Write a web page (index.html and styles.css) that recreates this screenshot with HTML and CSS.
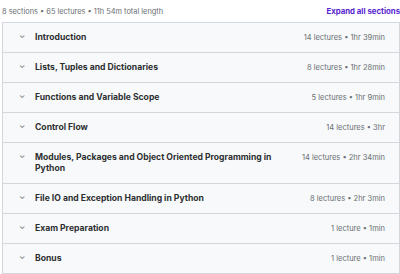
FILE: index.html
```html
<!DOCTYPE html>
<html lang="en">
<head>
    <meta charset="UTF-8">
    <title>Course content</title>
    <link rel="stylesheet" href="styles.css">
</head>
<body>
    <div class="content">
        <div class="head">
            <span class="summary">8 sections • 65 lectures • 11h 54m total length</span>
            <span class="expand">Expand all sections</span>
        </div>
        <ul class="sections">
            <li><span class="chev">&#8964;</span><span class="title">Introduction</span><span class="meta">14 lectures • 1hr 39min</span></li>
            <li><span class="chev">&#8964;</span><span class="title">Lists, Tuples and Dictionaries</span><span class="meta">8 lectures • 1hr 28min</span></li>
            <li><span class="chev">&#8964;</span><span class="title">Functions and Variable Scope</span><span class="meta">5 lectures • 1hr 9min</span></li>
            <li><span class="chev">&#8964;</span><span class="title">Control Flow</span><span class="meta">14 lectures • 3hr</span></li>
            <li><span class="chev">&#8964;</span><span class="title">Modules, Packages and Object Oriented Programming in Python</span><span class="meta">14 lectures • 2hr 34min</span></li>
            <li><span class="chev">&#8964;</span><span class="title">File IO and Exception Handling in Python</span><span class="meta">8 lectures • 2hr 3min</span></li>
            <li><span class="chev">&#8964;</span><span class="title">Exam Preparation</span><span class="meta">1 lecture • 1min</span></li>
            <li><span class="chev">&#8964;</span><span class="title">Bonus</span><span class="meta">1 lecture • 1min</span></li>
        </ul>
    </div>
</body>
</html>
```
FILE: styles.css
```css
*{
    margin: 0px;
    padding: 0px;
    list-style: none;
    box-sizing: border-box;
}
body{
    background: #fff;
    font-family: Inter, "Noto Sans", sans-serif;
    color: #2d2f31;
}
.content{
    width: 398px;
    margin-left: 2px;
}
.head{
    display: flex;
    justify-content: space-between;
    align-items: center;
    height: 22px;
}
.head .summary{
    font-size: 7.4px;
    color: #6a6f73;
}
.head .expand{
    font-size: 7.8px;
    font-weight: 700;
    color: #5624d0;
}
.sections{
    border: 1px solid #d1d7dc;
    border-top: none;
}
.sections li{
    display: flex;
    align-items: flex-start;
    background: #f7f9fa;
    border-top: 1px solid #d1d7dc;
    padding: 9px 14px 9px 16px;
    line-height: 11px;
}
.sections .chev{
    width: 16px;
    font-size: 8px;
    color: #6a6f73;
    position: relative;
    top: -2px;
}
.sections .title{
    flex: 1;
    max-width: 262px;
    font-size: 8.6px;
    font-weight: 700;
}
.sections .meta{
    margin-left: auto;
    font-size: 7.5px;
    color: #6a6f73;
}
```
